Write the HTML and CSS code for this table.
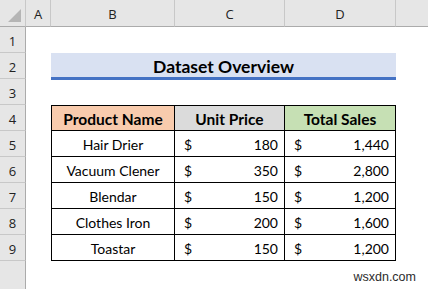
FILE: index.html
```html
<!DOCTYPE html>
<html>
<head>
<meta charset="utf-8">
<link rel="stylesheet" href="styles.css">
</head>
<body>
<div class="sheet">
  <div class="corner"><span class="tri"></span></div>
  <div class="colh">A</div>
  <div class="colh">B</div>
  <div class="colh">C</div>
  <div class="colh">D</div>
  <div class="colh last"></div>

  <div class="rowh">1</div><div class="blank span5"></div>

  <div class="rowh">2</div><div class="blank"></div>
  <div class="title">Dataset Overview</div><div class="blank"></div>

  <div class="rowh">3</div><div class="blank span5"></div>

  <div class="rowh">4</div><div class="blank"></div>
  <div class="cell th first top orange">Product Name</div>
  <div class="cell th top gray">Unit Price</div>
  <div class="cell th top green">Total Sales</div>
  <div class="blank"></div>

  <div class="rowh">5</div><div class="blank"></div>
  <div class="cell first name">Hair Drier</div>
  <div class="cell acc"><span>$</span><span>180</span></div>
  <div class="cell acc"><span>$</span><span>1,440</span></div>
  <div class="blank"></div>

  <div class="rowh">6</div><div class="blank"></div>
  <div class="cell first name">Vacuum Clener</div>
  <div class="cell acc"><span>$</span><span>350</span></div>
  <div class="cell acc"><span>$</span><span>2,800</span></div>
  <div class="blank"></div>

  <div class="rowh">7</div><div class="blank"></div>
  <div class="cell first name">Blendar</div>
  <div class="cell acc"><span>$</span><span>150</span></div>
  <div class="cell acc"><span>$</span><span>1,200</span></div>
  <div class="blank"></div>

  <div class="rowh">8</div><div class="blank"></div>
  <div class="cell first name">Clothes Iron</div>
  <div class="cell acc"><span>$</span><span>200</span></div>
  <div class="cell acc"><span>$</span><span>1,600</span></div>
  <div class="blank"></div>

  <div class="rowh">9</div><div class="blank"></div>
  <div class="cell first name">Toastar</div>
  <div class="cell acc"><span>$</span><span>150</span></div>
  <div class="cell acc"><span>$</span><span>1,200</span></div>
  <div class="blank"></div>

  <div class="rowh tail"></div><div class="blank span5 footer"><span class="mark">wsxdn.com</span></div>
</div>
</body>
</html>
```
FILE: styles.css
```css
html, body {
  margin: 0;
  padding: 0;
  background: #ffffff;
}
.sheet {
  width: 428px;
  height: 289px;
  display: grid;
  grid-template-columns: 26px 25px 124px 110px 111px 1fr;
  grid-template-rows: 27px repeat(9, 26px) 1fr;
  font-family: Lato, "Open Sans", sans-serif;
  color: #000;
  overflow: hidden;
  background: #fff;
}
.corner {
  background: #e6e6e6;
  border-right: 1px solid #c8c8c8;
  border-bottom: 1px solid #ababab;
  box-sizing: border-box;
  position: relative;
}
.tri {
  position: absolute;
  right: 4px;
  bottom: 4px;
  width: 0;
  height: 0;
  border-left: 13px solid transparent;
  border-bottom: 13px solid #b5b5b5;
}
.colh {
  background: #e6e6e6;
  border-right: 1px solid #c8c8c8;
  border-bottom: 1px solid #ababab;
  box-sizing: border-box;
  display: flex;
  align-items: center;
  justify-content: center;
  font-family: "Open Sans", sans-serif;
  font-size: 13px;
  color: #222;
  padding-top: 2px;
}
.colh.last {
  border-right: none;
}
.rowh {
  background: #e6e6e6;
  border-right: 1px solid #ababab;
  border-bottom: 1px solid #c8c8c8;
  box-sizing: border-box;
  display: flex;
  align-items: center;
  justify-content: center;
  font-family: "Open Sans", sans-serif;
  font-size: 13px;
  color: #222;
  padding-top: 2px;
}
.rowh.tail {
  border-bottom: none;
}
.blank {
  background: transparent;
}
.span5 {
  grid-column: 2 / 7;
}
.title {
  grid-column: 3 / 6;
  background: #d9e1f2;
  border-bottom: 3px solid #4472c4;
  margin-bottom: -1px;
  box-sizing: border-box;
  display: flex;
  align-items: center;
  justify-content: center;
  font-weight: 700;
  font-size: 17.5px;
  padding-top: 2px;
  position: relative;
  z-index: 1;
}
.cell {
  box-sizing: border-box;
  border-right: 1px solid #000;
  border-bottom: 1px solid #000;
  display: flex;
  align-items: center;
  font-size: 14px;
  padding-top: 1px;
}
.cell.first {
  border-left: 1px solid #000;
}
.cell.top {
  border-top: 1px solid #000;
}
.th {
  justify-content: center;
  font-weight: 700;
  font-size: 15.5px;
}
.orange { background: #f8cbad; }
.gray { background: #dbdbdb; }
.green { background: #c6e0b4; }
.name {
  justify-content: center;
}
.acc {
  justify-content: space-between;
  padding-left: 9px;
  padding-right: 6px;
}
.footer {
  display: flex;
  justify-content: flex-end;
  align-items: flex-end;
  padding-right: 12px;
  padding-bottom: 5px;
}
.mark {
  font-family: "Liberation Sans", Arial, sans-serif;
  font-size: 12.5px;
  color: #2b2b2b;
}
```
